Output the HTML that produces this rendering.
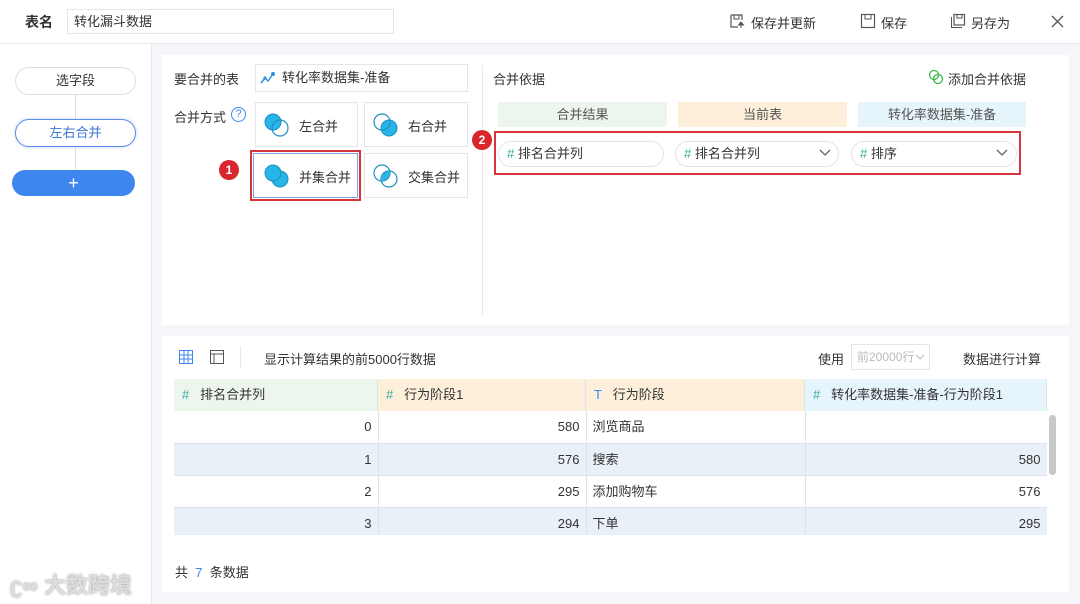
<!DOCTYPE html>
<html><head><meta charset="utf-8"><style>
*{box-sizing:border-box;margin:0;padding:0}
body{width:1080px;height:604px;background:#f4f6f9;font-family:"Liberation Sans","Noto Sans CJK SC",sans-serif;font-size:13px;color:#333;position:relative;overflow:hidden}
.a{position:absolute}
.top{left:0;top:0;width:1080px;height:44px;background:#fff;border-bottom:1px solid #e8eaee}
.side{left:0;top:44px;width:152px;height:560px;background:#fff;border-right:1px solid #e6e8ec}
.panel{background:#fff}
.pill{border:1px solid #dcdfe6;border-radius:14px;text-align:center;line-height:26px;background:#fff}
.box{border:1px solid #e3e5ea;background:#fff}
.red{border:2px solid #d9343b}
.badge{width:20px;height:20px;border-radius:50%;background:#d9252c;color:#fff;font-size:12px;text-align:center;line-height:20px;font-weight:bold}
.hash{color:#3aa99f}
.th{top:379px;height:32px;line-height:32px;border-right:1px solid #dbe3ef}
.td{height:32px;line-height:31px;border-right:1px solid #dbe3ef;border-bottom:1px solid #dbe3ef;text-align:right;padding:0 6px 0 0}
</style></head><body>
<div class="a top"></div>
<div class="a" style="left:25px;top:12px;font-weight:bold;font-size:14px">表名</div>
<div class="a box" style="left:67px;top:9px;width:327px;height:25px;padding-left:6px;line-height:23px">转化漏斗数据</div>
<svg class="a" style="left:729px;top:13px" width="16" height="16"><path d="M2 2h11v5M2 2v12h7" fill="none" stroke="#555" stroke-width="1.2"/><path d="M5 2v4h5V2" fill="none" stroke="#555"/><path d="M12 9l-2.5 3h5z M12 11v4" stroke="#555" fill="#555"/></svg>
<div class="a" style="left:751px;top:13px">保存并更新</div>
<svg class="a" style="left:860px;top:13px" width="16" height="16"><rect x="1.5" y="1.5" width="13" height="13" fill="none" stroke="#555" stroke-width="1.2"/><path d="M5 2v4h6V2" fill="none" stroke="#555"/></svg>
<div class="a" style="left:881px;top:13px">保存</div>
<svg class="a" style="left:950px;top:13px" width="16" height="16"><rect x="4" y="1.5" width="10.5" height="10.5" fill="none" stroke="#555" stroke-width="1.2"/><path d="M1.5 4v10.5H12M7 2v3h5V2" fill="none" stroke="#555"/></svg>
<div class="a" style="left:971px;top:13px">另存为</div>
<svg class="a" style="left:1051px;top:15px" width="13" height="13"><path d="M1 1l11 11M12 1L1 12" stroke="#555" stroke-width="1.3"/></svg>

<div class="a side"></div>
<div class="a" style="left:75px;top:82px;width:1px;height:100px;background:#ddd"></div>
<div class="a pill" style="left:15px;top:67px;width:121px;height:28px">选字段</div>
<div class="a pill" style="left:15px;top:119px;width:121px;height:28px;border-color:#5b8fe6;color:#3b77d8;box-shadow:0 0 3px #bcd3f5">左右合并</div>
<div class="a" style="left:12px;top:170px;width:123px;height:26px;border-radius:13px;background:#3d86ee;color:#fff;text-align:center;line-height:26px;font-size:18px">+</div>
<div class="a" style="left:10px;top:568px;color:#ddd;font-size:22px;font-weight:bold;text-shadow:0 0 2px #999">ʗ∞ 大数跨境</div>

<div class="a panel" style="left:162px;top:55px;width:907px;height:270px"></div>
<div class="a" style="left:482px;top:65px;width:1px;height:250px;background:#e6e8ec"></div>
<div class="a" style="left:174px;top:69px">要合并的表</div>
<div class="a box" style="left:255px;top:64px;width:213px;height:28px;line-height:26px;padding-left:26px">转化率数据集-准备</div>
<svg class="a" style="left:260px;top:71px" width="16" height="14"><path d="M1 12l4-5 3 3 5-7" fill="none" stroke="#2d8fe0" stroke-width="1.5"/><circle cx="13" cy="3" r="2" fill="#2d8fe0"/><circle cx="5" cy="7" r="1.6" fill="#2d8fe0"/></svg>
<div class="a" style="left:174px;top:107px">合并方式</div>
<div class="a" style="left:231px;top:107px;width:15px;height:15px;border:1px solid #3d86ee;border-radius:50%;color:#3d86ee;font-size:11px;text-align:center;line-height:13px">?</div>
<div class="a box" style="left:255px;top:102px;width:103px;height:45px"></div>
<div class="a box" style="left:364px;top:102px;width:104px;height:45px"></div>
<div class="a box" style="left:364px;top:153px;width:104px;height:45px"></div>
<div class="a box red" style="left:250px;top:150px;width:111px;height:51px;padding:1px"><div style="border:1px solid #7da6e8;height:100%"></div></div>
<svg class="a" style="left:263px;top:112px" width="28" height="26"><circle cx="10" cy="10" r="8" fill="#27b5e8" stroke="#1f8fc0"/><circle cx="17" cy="16" r="8" fill="none" stroke="#1f8fc0" stroke-width="1.2"/></svg>
<div class="a" style="left:299px;top:116px">左合并</div>
<svg class="a" style="left:372px;top:112px" width="28" height="26"><circle cx="17" cy="16" r="8" fill="#27b5e8" stroke="#1f8fc0"/><circle cx="10" cy="10" r="8" fill="none" stroke="#1f8fc0" stroke-width="1.2"/></svg>
<div class="a" style="left:408px;top:116px">右合并</div>
<svg class="a" style="left:263px;top:163px" width="28" height="26"><circle cx="17" cy="16" r="8" fill="#27b5e8" stroke="#1f8fc0"/><circle cx="10" cy="10" r="8" fill="#27b5e8" stroke="#1f8fc0"/></svg>
<div class="a" style="left:299px;top:167px">并集合并</div>
<svg class="a" style="left:372px;top:163px" width="28" height="26"><circle cx="10" cy="10" r="8" fill="none" stroke="#1f8fc0" stroke-width="1.2"/><circle cx="17" cy="16" r="8" fill="none" stroke="#1f8fc0" stroke-width="1.2"/><path d="M17 8A8 8 0 0 1 10 18A8 8 0 0 1 17 8z" fill="#27b5e8"/></svg>
<div class="a" style="left:408px;top:167px">交集合并</div>
<div class="a badge" style="left:219px;top:160px">1</div>

<div class="a" style="left:493px;top:69px">合并依据</div>
<svg class="a" style="left:928px;top:69px" width="16" height="16"><circle cx="6" cy="6" r="4.5" fill="none" stroke="#3bb84a" stroke-width="1.3"/><circle cx="10" cy="10" r="4.5" fill="none" stroke="#3bb84a" stroke-width="1.3"/></svg>
<div class="a" style="left:948px;top:69px">添加合并依据</div>
<div class="a" style="left:498px;top:102px;width:169px;height:25px;background:#edf6ec;text-align:center;line-height:25px;color:#555">合并结果</div>
<div class="a" style="left:678px;top:102px;width:169px;height:25px;background:#fdefd9;text-align:center;line-height:25px;color:#555">当前表</div>
<div class="a" style="left:858px;top:102px;width:168px;height:25px;background:#e6f4fb;text-align:center;line-height:25px;color:#555">转化率数据集-准备</div>
<div class="a red" style="left:494px;top:131px;width:527px;height:44px"></div>
<div class="a badge" style="left:472px;top:130px">2</div>
<div class="a pill" style="left:498px;top:141px;width:166px;height:26px;text-align:left;padding-left:8px;line-height:24px;border-color:#e2e4e8"><span class="hash">#</span> 排名合并列</div>
<div class="a pill" style="left:675px;top:141px;width:164px;height:26px;text-align:left;padding-left:8px;line-height:24px;border-color:#e2e4e8"><span class="hash">#</span> 排名合并列</div>
<div class="a pill" style="left:851px;top:141px;width:166px;height:26px;text-align:left;padding-left:8px;line-height:24px;border-color:#e2e4e8"><span class="hash">#</span> 排序</div>
<svg class="a" style="left:819px;top:149px" width="12" height="8"><path d="M1 1l5 5 5-5" fill="none" stroke="#666" stroke-width="1.3"/></svg>
<svg class="a" style="left:996px;top:149px" width="12" height="8"><path d="M1 1l5 5 5-5" fill="none" stroke="#666" stroke-width="1.3"/></svg>

<div class="a panel" style="left:162px;top:336px;width:907px;height:256px"></div>
<svg class="a" style="left:179px;top:350px" width="14" height="14"><path d="M.5 .5h13v13H.5zM.5 5h13M.5 9h13M5 .5v13M9 .5v13" fill="none" stroke="#3d86ee"/></svg>
<svg class="a" style="left:210px;top:350px" width="14" height="14"><path d="M.5 .5h13v13H.5zM.5 4h13M4 4v9.5" fill="none" stroke="#555"/></svg>
<div class="a" style="left:240px;top:346px;width:1px;height:22px;background:#e6e6e6"></div>
<div class="a" style="left:264px;top:349px">显示计算结果的前5000行数据</div>
<div class="a" style="left:818px;top:349px">使用</div>
<div class="a box" style="left:851px;top:344px;width:79px;height:26px;line-height:24px;padding-left:5px;color:#bbb;white-space:nowrap;font-size:12px">前20000行</div>
<svg class="a" style="left:915px;top:354px" width="10" height="7"><path d="M1 1l4 4 4-4" fill="none" stroke="#bbb"/></svg>
<div class="a" style="left:963px;top:349px">数据进行计算</div>

<div class="a th" style="left:174px;width:204px;background:#edf6ec;padding-left:8px"><span class="hash">#</span>&nbsp;&nbsp; 排名合并列</div>
<div class="a th" style="left:378px;width:208px;background:#fdefd9;padding-left:8px"><span class="hash">#</span>&nbsp;&nbsp; 行为阶段1</div>
<div class="a th" style="left:586px;width:219px;background:#fdefd9;padding-left:8px"><span style="color:#3d86ee">T</span>&nbsp;&nbsp; 行为阶段</div>
<div class="a th" style="left:805px;width:242px;background:#e6f4fb;padding-left:8px"><span class="hash">#</span>&nbsp;&nbsp; 转化率数据集-准备-行为阶段1</div>
<div class="a" style="left:174px;top:411px;width:873px;height:124px;overflow:hidden">
<table style="border-collapse:collapse;table-layout:fixed;width:873px">
<tr style="background:#fff"><td class="td" style="width:204px">0</td><td class="td" style="width:208px">580</td><td class="td" style="width:219px;text-align:left;padding-left:6px">浏览商品</td><td class="td" style="width:242px"></td></tr>
<tr style="background:#eaf0f8"><td class="td">1</td><td class="td">576</td><td class="td" style="text-align:left;padding-left:6px">搜索</td><td class="td">580</td></tr>
<tr style="background:#fff"><td class="td">2</td><td class="td">295</td><td class="td" style="text-align:left;padding-left:6px">添加购物车</td><td class="td">576</td></tr>
<tr style="background:#eaf0f8"><td class="td">3</td><td class="td">294</td><td class="td" style="text-align:left;padding-left:6px">下单</td><td class="td">295</td></tr>
</table></div>
<div class="a" style="left:1049px;top:415px;width:7px;height:60px;border-radius:4px;background:#c8c8c8"></div>
<div class="a" style="left:175px;top:562px">共 <span style="color:#3d86ee">&nbsp;7&nbsp;</span> 条数据</div>
</body></html>
